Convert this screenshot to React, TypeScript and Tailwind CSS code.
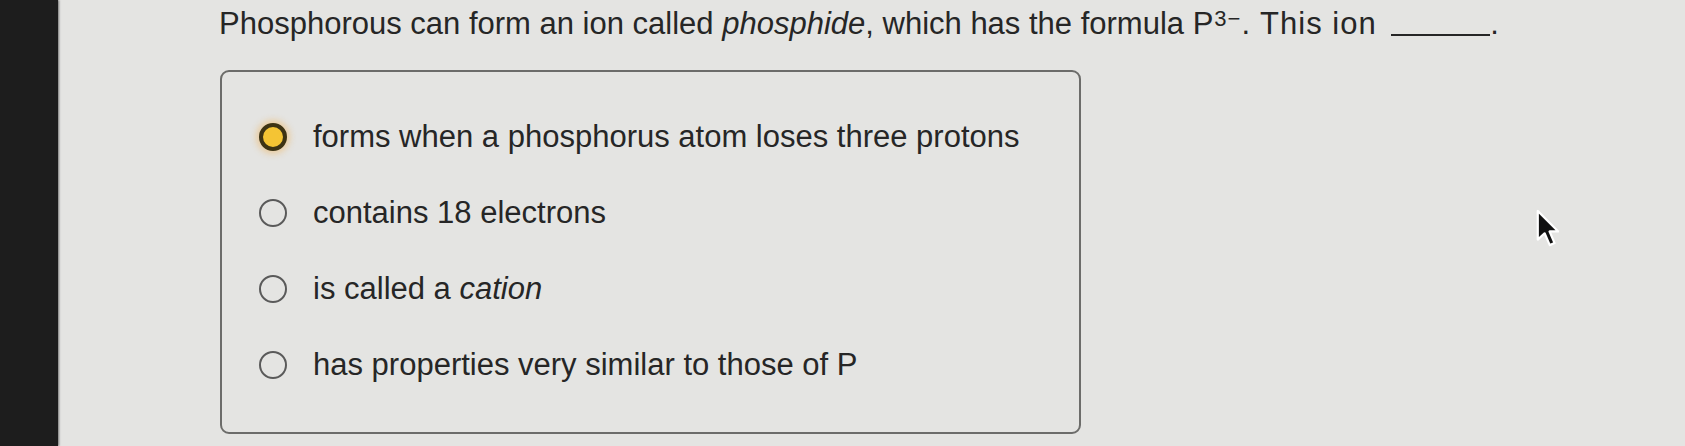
import React from 'react';

const options: { label: React.ReactNode; selected?: boolean }[] = [
  { label: 'forms when a phosphorus atom loses three protons', selected: true },
  { label: 'contains 18 electrons' },
  {
    label: (
      <>
        is called a <em className="italic">cation</em>
      </>
    ),
  },
  { label: 'has properties very similar to those of P' },
];

const Radio: React.FC<{ selected?: boolean }> = ({ selected }) =>
  selected ? (
    <span className="w-[28px] h-[28px] rounded-full bg-[#f4c434] border-[4px] border-[#3d3314] shadow-[0_0_6px_3px_rgba(240,175,80,0.45)] shrink-0" />
  ) : (
    <span className="w-[28px] h-[28px] rounded-full border-[2px] border-[#5a5a5a] shrink-0" />
  );

const App: React.FC = () => {
  return (
    <div
      className="relative flex w-[1685px] h-[446px] overflow-hidden bg-[#e4e4e2] text-[#262626]"
      style={{ fontFamily: '"Liberation Sans", Arial, sans-serif' }}
    >
      {/* dark bezel on the left */}
      <div className="w-[58px] h-full bg-[#1d1d1d] shrink-0 shadow-[1px_0_2px_rgba(0,0,0,0.5)]" />

      <div className="flex flex-col pt-[4px]">
        <h1 className="ml-[161px] text-[31px] leading-[40px] whitespace-nowrap">
          Phosphorous can form an ion called <em className="italic">phosphide</em>, which has the formula P
          <sup className="text-[22px] top-[-8px] ml-[1px] tracking-[1px]">3−</sup>
          <span className="tracking-[1px]">. This ion</span>{' '}
          <span className="inline-block w-[99px] ml-[6px] border-b-[2px] border-[#262626] translate-y-[2px]" />.
        </h1>

        {/* answer choices */}
        <div className="mt-[26px] ml-[162px] w-[861px] h-[364px] border-[2px] border-[#6c6c6a] rounded-[9px] pt-[27px] pb-[29px] pl-[37px] flex flex-col">
          {options.map((opt, i) => (
            <div key={i} className="h-[76px] flex items-center gap-[26px]">
              <Radio selected={opt.selected} />
              <span className="text-[31px] leading-[40px] whitespace-nowrap">{opt.label}</span>
            </div>
          ))}
        </div>
      </div>

      {/* mouse pointer */}
      <svg
        className="absolute left-[1535px] top-[208px]"
        width="24"
        height="41"
        viewBox="0 0 13 22"
      >
        <path
          d="M1.5 1.5 L1.5 17 L5.2 13.6 L8 20 L10.6 18.9 L7.9 12.6 L12.6 12.6 Z"
          fill="#111"
          stroke="#fff"
          strokeWidth="1.2"
          strokeLinejoin="round"
        />
      </svg>
    </div>
  );
};

export default App;
